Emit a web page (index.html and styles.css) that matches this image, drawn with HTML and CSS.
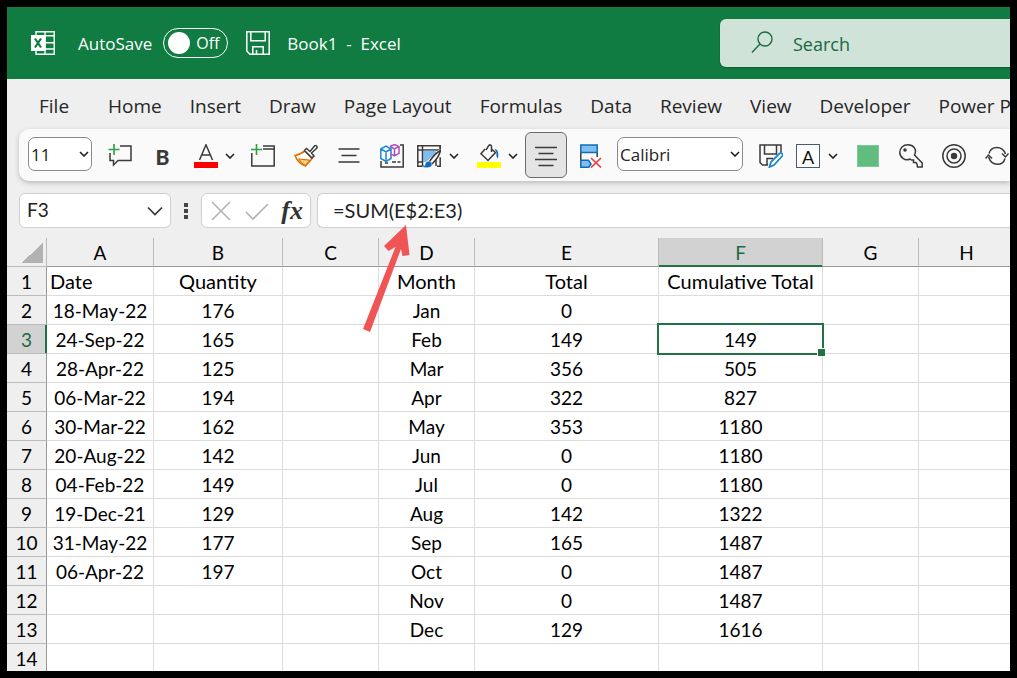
FILE: index.html
```html
<!DOCTYPE html>
<html lang="en">
<head>
<meta charset="utf-8">
<title>Book1 - Excel</title>
<link rel="stylesheet" href="styles.css">
</head>
<body>
<div class="app">
  <header class="titlebar">
    <svg class="icon app-logo" viewBox="0 0 24 24" fill="none" stroke="#fff" stroke-width="1.4"><path d="M5 4V.8h18.2v22.4H5V20M14 .8v22.4M5 4.8h18M14 11.8h9M14 18h9"/><path d="M0 4h14.500v16H0z" fill="#fff" stroke="none"/><path d="M4 7.500l6 9M10 7.500l-6 9" stroke="#107c41" stroke-width="2.2"/></svg>
    <label class="autosave" for="autosave">AutoSave</label>
    <span class="switch"><input type="checkbox" id="autosave" class="switch-input"><span class="switch-knob"></span><span class="switch-text">Off</span></span>
    <button class="plain save" aria-label="Save"><svg class="icon" viewBox="0 0 24 24" fill="none" stroke="#fff" stroke-width="1.500"><path d="M.8.8h22.400v22.400H4L.8 20zM4.800.8v9h14.400v-9M6.800 23v-7.200h10.400V23M10.500 23v-4"/></svg></button>
    <span class="doc">Book1&nbsp; -&nbsp; Excel</span>
    <label class="search">
      <svg class="icon" viewBox="0 0 24 24" fill="none" stroke="#1c6b42" stroke-width="1.400"><circle cx="14" cy="8" r="7"/><path d="M9 13L1 21.500"/></svg>
      <input type="text" class="search-input" placeholder="Search" aria-label="Search">
    </label>
  </header>

  <nav class="tabs">
    <button class="tab tab-file">File</button><button class="tab">Home</button><button class="tab">Insert</button><button class="tab">Draw</button><button class="tab">Page Layout</button><button class="tab">Formulas</button><button class="tab">Data</button><button class="tab">Review</button><button class="tab">View</button><button class="tab">Developer</button><button class="tab">Power P</button>
  </nav>

  <div class="toolbar">
    <span class="picker picker-size"><select aria-label="Font size"><option>11</option></select><svg class="chev" viewBox="0 0 10 6"><path d="M1 1l4 4 4-4"/></svg></span>
    <button class="tool" aria-label="New comment"><svg class="icon" viewBox="0 0 24 24"><path class="ln" d="M12 2h11v14.500H10L5.500 21v-4.500H2V9"/><path d="M6 0v11M.5 5.500h11" stroke="#2ea043" stroke-width="1.600"/></svg></button>
    <button class="tool bold" aria-label="Bold">B</button>
    <button class="tool split" aria-label="Font color"><svg class="icon" viewBox="0 0 24 24"><path class="ln" d="M5.500 16L12 0.800 18.500 16M7.800 11h8.400"/><path d="M0 18h24v6H0z" fill="#f00" stroke="none"/></svg><svg class="chev" viewBox="0 0 10 6"><path d="M1 1l4 4 4-4"/></svg></button>
    <button class="tool" aria-label="New window"><svg class="icon" viewBox="0 0 24 24"><path class="ln" d="M12 2h11.200v20H.8V9M12 5h11"/><path d="M5.500 0v11M0 5.500h11" stroke="#2ea043" stroke-width="1.600"/></svg></button>
    <button class="tool" aria-label="Format painter"><svg class="icon" viewBox="0 0 24 24"><path d="M11 7C8 9 4 11 1 11.500c2 5 6 9 10.500 10.500 1-2 4-4 6.500-7.500z" fill="#fff" stroke="#e07000" stroke-width="1.600"/><path d="M5 15c4 1 8 0 11 1.500L11.500 21.500C8 20 6 17.500 5 15z" fill="#ffd08a" stroke="#e07000" stroke-width="1.200"/><path class="ln paper" d="M10.500 6.500l2-2 3.500 3L20.500 2c1-1.200 3.500.5 2.200 2.200L17.500 9l2.500 3-2 2z"/></svg></button>
    <button class="tool" aria-label="Center"><svg class="icon" viewBox="0 0 24 24"><path class="ln" d="M1.500 5h21M4.500 11.500h15M1.500 18h21"/></svg></button>
    <button class="tool" aria-label="Objects"><svg class="icon" viewBox="0 0 24 24"><path class="ln" d="M1 17v6h22.200V1H20M5 19h3M12 18h4M17.500 18h3"/><path d="M.8 5L6 2l5 3v9.500L6 17.500.8 14.500zM.8 5L6 8l5-3M6 8v9" fill="#fff" stroke="#1c87cf" stroke-width="1.500"/><path d="M10 2.500L14.500.6 19 2.500v6.800l-4.500 2.500-4-2M10 2.500l4.500 2.300L19 2.500M14.500 5v6.500" fill="none" stroke="#b04bbf" stroke-width="1.500"/></svg></button>
    <button class="tool split tight" aria-label="Format as table"><svg class="icon" viewBox="0 0 24 24"><path d="M6 6h13v12H6z" fill="#83bdec" stroke="none"/><path class="ln" d="M.8 1.800h22.400v20.400H.8zM.8 6h22.400M5.500 2v20M1 18h5"/><path d="M8 18L24 4v20H8z" fill="#fafafa" stroke="none"/><path d="M8 6.500h11v3L9 18H6.500V6.500z" fill="#83bdec" stroke="none"/><path class="ln" d="M23.200 1.800v4M20 22.200h3.200v-9M19 15v7"/><path class="ln paper" d="M23.500 6.500c-4 2-8 6.500-11 11l2.500 2.500c4-4 7.500-8.500 8.500-13.500z"/><path d="M14 18c-3-2-6 0-6 3-.5 1.500-2 2-3 2 4 1.500 10 1 10-2.500z" fill="#0f6cbd" stroke="#fff" stroke-width=".5"/></svg><svg class="chev" viewBox="0 0 10 6"><path d="M1 1l4 4 4-4"/></svg></button>
    <button class="tool split" aria-label="Fill color"><svg class="icon" viewBox="0 0 24 24"><path class="ln" d="M8 5L4 9.800l7 6.700 7.500-8L14.500 5M9 6L11.500 2c1-2 3-1 3 .5V8"/><path d="M17.500 5c3.500 0 4.500 4 3.500 9.500-1.500-1-2-3-1.500-6z" fill="#0f6cbd" stroke="none"/><path d="M0 18h24v6H0z" fill="#ff0" stroke="none"/></svg><svg class="chev" viewBox="0 0 10 6"><path d="M1 1l4 4 4-4"/></svg></button>
    <button class="tool pressed" aria-label="Center align" aria-pressed="true"><svg class="icon" viewBox="0 0 24 24"><path class="ln" d="M1 3.500h22M4.500 9.500h15M1 15.500h22M4.500 21.500h15"/></svg></button>
    <button class="tool" aria-label="Delete rows"><svg class="icon" viewBox="0 0 24 24"><path d="M2.800 1h16.400v7.500H2.800z" fill="#83bdec" stroke="#0f6cbd" stroke-width="1.500"/><path class="ln" d="M2.800 9v7M19.200 9v4"/><path d="M10.500 16.200H2.800v7h8L13 20z" fill="#83bdec" stroke="#0f6cbd" stroke-width="1.500"/><path d="M13 14l10 9.500M23 14l-10 9.500" stroke="#e8403a" stroke-width="1.700"/></svg></button>
    <span class="picker picker-font"><select aria-label="Font"><option>Calibri</option></select><svg class="chev" viewBox="0 0 10 6"><path d="M1 1l4 4 4-4"/></svg></span>
    <button class="tool" aria-label="Save as"><svg class="icon" viewBox="0 0 24 24"><path class="ln" d="M9 21H3.500L1 18.500V1h21v7M5.500 1v9h12V1M8 21v-6.500h6"/><path d="M10.500 23l1.500-5 8.500-8.500c2-1.500 4 .8 2.700 2.500L15 21z" fill="#fff" stroke="#1c87cf" stroke-width="1.800"/></svg></button>
    <button class="tool split tight" aria-label="Cell style"><span class="letter">A</span><svg class="chev" viewBox="0 0 10 6"><path d="M1 1l4 4 4-4"/></svg></button>
    <button class="tool" aria-label="Green"><span class="swatch"></span></button>
    <button class="tool" aria-label="Key"><svg class="icon" viewBox="0 0 24 24"><path class="ln" d="M15.500 11c3-6-1.500-10.200-6.500-10.200S.8 4 .8 8.500s5 9 10.200 6.500l1.500 1h2v2.500h2.500l1 1.500.5 3h4.700v-4z"/><circle cx="6" cy="6" r="1.800" fill="#3b3a39"/></svg></button>
    <button class="tool" aria-label="Target"><svg class="icon" viewBox="0 0 24 24"><circle class="ln" cx="12" cy="12" r="11.200"/><circle class="ln" cx="12" cy="12" r="7"/><circle cx="12" cy="12" r="3.200" fill="#3b3a39"/></svg></button>
    <button class="tool" aria-label="Refresh"><svg class="icon" viewBox="0 0 24 24"><path class="ln" d="M4 9.500C6 2 17 1 20.500 10M20 14.500C18 22 7 23 3.500 13M.5 14.500l3-3.500 3.500 3.500M17 9.500l3.500 3.500 3-3.500"/></svg></button>
  </div>

  <div class="formula-row">
    <div class="box name-box"><input type="text" value="F3" aria-label="Name box"><button class="plain" aria-label="Open name list"><svg class="big-chev" viewBox="0 0 16 10"><path d="M1 1.500l7 7 7-7"/></svg></button></div>
    <svg class="dots" viewBox="0 0 4 16"><path d="M0 0h4v4H0zM0 6h4v4H0zM0 12h4v4H0z"/></svg>
    <div class="box fx-box">
      <button class="plain" aria-label="Cancel"><svg class="fx-icon" viewBox="0 0 24 20"><path d="M3 1l18 18M21 1L3 19"/></svg></button>
      <button class="plain" aria-label="Enter"><svg class="fx-icon" viewBox="0 0 24 20"><path d="M1 11l7 7L23 3"/></svg></button>
      <button class="plain fx" aria-label="Insert function">fx</button>
    </div>
    <div class="box formula"><input type="text" value="=SUM(E$2:E3)" aria-label="Formula"></div>
  </div>

  <div class="sheet">
    <table class="grid">
      <colgroup><col class="w-head"><col class="w-a"><col class="w-b"><col class="w-m"><col class="w-m"><col class="w-e"><col class="w-f"><col class="w-m"><col class="w-m"></colgroup>
      <thead><tr><th class="corner"><span class="corner-mark"></span></th><th>A</th><th>B</th><th>C</th><th>D</th><th>E</th><th class="active">F</th><th>G</th><th>H</th></tr></thead>
      <tbody>
        <tr class="labels"><th>1</th><td class="left">Date</td><td>Quantity</td><td></td><td>Month</td><td>Total</td><td>Cumulative Total</td><td></td><td></td></tr>
        <tr><th>2</th><td>18-May-22</td><td>176</td><td></td><td>Jan</td><td>0</td><td></td><td></td><td></td></tr>
        <tr><th class="active">3</th><td>24-Sep-22</td><td>165</td><td></td><td>Feb</td><td>149</td><td class="selected">149</td><td></td><td></td></tr>
        <tr><th>4</th><td>28-Apr-22</td><td>125</td><td></td><td>Mar</td><td>356</td><td>505</td><td></td><td></td></tr>
        <tr><th>5</th><td>06-Mar-22</td><td>194</td><td></td><td>Apr</td><td>322</td><td>827</td><td></td><td></td></tr>
        <tr><th>6</th><td>30-Mar-22</td><td>162</td><td></td><td>May</td><td>353</td><td>1180</td><td></td><td></td></tr>
        <tr><th>7</th><td>20-Aug-22</td><td>142</td><td></td><td>Jun</td><td>0</td><td>1180</td><td></td><td></td></tr>
        <tr><th>8</th><td>04-Feb-22</td><td>149</td><td></td><td>Jul</td><td>0</td><td>1180</td><td></td><td></td></tr>
        <tr><th>9</th><td>19-Dec-21</td><td>129</td><td></td><td>Aug</td><td>142</td><td>1322</td><td></td><td></td></tr>
        <tr><th>10</th><td>31-May-22</td><td>177</td><td></td><td>Sep</td><td>165</td><td>1487</td><td></td><td></td></tr>
        <tr><th>11</th><td>06-Apr-22</td><td>197</td><td></td><td>Oct</td><td>0</td><td>1487</td><td></td><td></td></tr>
        <tr><th>12</th><td></td><td></td><td></td><td>Nov</td><td>0</td><td>1487</td><td></td><td></td></tr>
        <tr><th>13</th><td></td><td></td><td></td><td>Dec</td><td>129</td><td>1616</td><td></td><td></td></tr>
        <tr><th>14</th><td></td><td></td><td></td><td></td><td></td><td></td><td></td><td></td></tr>
      </tbody>
    </table>
  </div>
  <svg class="arrow" viewBox="0 0 50 110" aria-hidden="true"><path d="M44 3L22 24l4.500 5 7-4L1 107l7 3L39 27l1.500 7 7-1z"/></svg>
</div>
</body>
</html>
```
FILE: styles.css
```css
* { box-sizing: border-box; }
body {
  margin: 0;
  height: 100vh;
  padding: 7px;
  background: #000;
  font-family: "Open Sans", "Noto Sans", sans-serif;
  overflow: hidden;
}
button, input, select { font: inherit; color: inherit; margin: 0; }
.app {
  position: relative;
  height: 100%;
  display: flex;
  flex-direction: column;
  overflow: hidden;
  background: #efefef;
}
.app > * { flex-shrink: 0; }
.icon { display: block; width: 24px; height: 24px; flex: none; fill: none; }
.plain { border: 0; padding: 0; background: none; }

.titlebar {
  display: flex;
  align-items: center;
  height: 72px;
  padding-left: 24px;
  background: #107c41;
  color: #fff;
  font-size: 17px;
}
.autosave { margin-left: 23px; }
.switch {
  display: grid;
  grid-template-columns: 22px 1fr;
  align-items: center;
  gap: 6px;
  width: 65px;
  height: 30px;
  margin-left: 11px;
  padding-left: 4px;
  border: 1px solid #fff;
  border-radius: 15px;
  font-size: 16px;
}
.switch-input { grid-area: 1 / 1 / 2 / 3; width: 100%; height: 100%; opacity: 0; }
.switch-knob { grid-area: 1 / 1; width: 22px; height: 22px; border-radius: 50%; background: #fff; }
.switch-text { grid-area: 1 / 2; }
.save { margin-left: 18px; }
.doc { margin-left: 17px; flex: 1; white-space: nowrap; }
.search {
  display: flex;
  align-items: center;
  gap: 18px;
  width: 290px;
  height: 48px;
  padding-left: 31px;
  border-radius: 6px 0 0 6px;
  background: #cfe3d8;
  box-shadow: 0 1px 2px #0a5c2e;
  color: #19693f;
  font-size: 18px;
}
.search-input { width: 100%; min-width: 0; border: 0; padding: 2px 0 0; background: none; outline: 0; }
.search-input::placeholder { color: #19693f; opacity: 1; }

.tabs { display: flex; height: 50px; padding: 0 0 0 18px; overflow: hidden; }
.tab {
  flex: none;
  border: 0;
  padding: 4px 14px 0;
  background: none;
  color: #262626;
  font-size: 19px;
  white-space: nowrap;
}
.tab:last-child { padding-right: 0; }
.tab-file { margin-right: 11px; }

.toolbar {
  display: flex;
  align-items: center;
  height: 52px;
  margin-left: 12px;
  padding-left: 9px;
  border-radius: 10px 0 0 10px;
  background: #fafafa;
  box-shadow: 0 2px 5px #bbb;
}
.picker { display: grid; align-items: center; height: 34px; margin-bottom: 2px; flex: none; }
.picker > * { grid-area: 1 / 1; }
.picker select {
  appearance: none;
  width: 100%;
  height: 34px;
  padding: 0 2px;
  border: 1px solid #8a8a8a;
  border-radius: 7px;
  background: #fff;
  color: #222;
  font-size: 17px;
}
.picker .chev { justify-self: end; margin-right: 3px; pointer-events: none; }
.picker-size { width: 64px; margin-right: 6px; }
.picker-font { width: 126px; margin: 0 6px 2px 6px; }
.tool {
  display: flex;
  align-items: center;
  justify-content: center;
  flex: none;
  width: 43px;
  height: 46px;
  padding: 2px 0 0;
  border: 0;
  background: none;
  color: #3b3a39;
}
.ln { stroke: #3b3a39; stroke-width: 1.500; fill: none; }
.paper { fill: #fff; }
.chev { width: 10px; height: 6px; flex: none; fill: none; stroke: #222; stroke-width: 1.600; }
.split { width: 57px; justify-content: flex-start; gap: 7px; padding-left: 10px; }
.tight { width: 54px; padding-left: 4px; gap: 8px; }
.bold { font: 900 21px Lato, sans-serif; }
.pressed { border: 1px solid #6b6b6b; border-radius: 6px; background: #e4e4e4; margin: 0 1px; width: 42px; }
.letter {
  width: 24px;
  height: 24px;
  border: 1px solid #4c5b73;
  background: #fff;
  color: #111;
  font: 18px/24px Lato, sans-serif;
}
.swatch { width: 22px; height: 22px; border: 1px solid #7fca98; background: #61bd7f; }

.formula-row {
  display: flex;
  align-items: center;
  height: 57px;
  padding: 2px 0 0 12px;
  color: #222;
  font-family: Lato, sans-serif;
  font-size: 20px;
}
.box { display: flex; align-items: center; height: 35px; border: 1px solid #cfcfcf; border-radius: 6px; background: #fff; }
.box input { width: 100%; min-width: 0; border: 0; padding: 0 0 2px; outline: 0; background: none; }
.name-box { width: 152px; padding: 0 7px; }
.name-box input { font-size: 19px; }
.big-chev { display: block; width: 16px; height: 10px; fill: none; stroke: #333; stroke-width: 1.600; }
.dots { width: 4px; height: 16px; margin: 0 13px; fill: #444; }
.fx-box { width: 110px; padding: 0 7px; justify-content: space-between; }
.fx-icon { display: block; width: 24px; height: 20px; fill: none; stroke: #b3b3b3; stroke-width: 1.600; }
.fx { color: #333; font: italic bold 26px/30px "Liberation Serif", serif; }
.formula { flex: 1; margin-left: 6px; padding-left: 15px; border-right: 0; border-radius: 6px 0 0 6px; }

.sheet { overflow: hidden; font-family: Lato, sans-serif; font-size: 19px; color: #000; }
.grid { table-layout: fixed; width: 1008px; border-spacing: 0; background: #fff; }
.w-head { width: 40px; }
.w-a { width: 107px; }
.w-b { width: 129px; }
.w-m { width: 96px; }
.w-e { width: 184px; }
.w-f { width: 164px; }
.grid th, .grid td {
  height: 29px;
  padding: 2px 0 0;
  border: solid #dcdcdc;
  border-width: 0 1px 1px 0;
  line-height: 24px;
  font-weight: 400;
  text-align: center;
  white-space: nowrap;
}
.grid .labels td { padding-top: 0; font-size: 20px; }
.grid th { background: #efefef; border-color: #a0a0a0; }
.grid thead th { border-right-color: #bbb; border-bottom-color: #999; }
.grid tbody th { border-right-color: #999; border-bottom-color: #bbb; }
.grid .left { padding-left: 3px; text-align: left; }
.grid .corner { padding: 0 3px 3px 0; vertical-align: bottom; border-bottom-color: #bbb; }
.corner-mark { display: block; width: 21px; height: 21px; margin-left: auto; background: linear-gradient(135deg, transparent 50%, #b2b2b2 50%); }
.grid .active { background: #d2d2d2; color: #1e6b45; }
.grid thead .active { box-shadow: inset 0 -1px #217346; border-bottom-color: #217346; }
.grid tbody .active { box-shadow: inset -1px 0 #217346; border-right-color: #217346; }
.grid .selected { position: relative; }
.selected::before { content: ""; position: absolute; inset: -2px -2px -2px -2px; border: 2px solid #217346; }
.selected::after { content: ""; position: absolute; right: -3px; bottom: -3px; width: 7px; height: 7px; border: solid #fff; border-width: 1px 0 0 1px; background: #217346; }

.arrow { position: absolute; left: 355px; top: 215px; width: 50px; height: 110px; fill: #f05555; }
```
